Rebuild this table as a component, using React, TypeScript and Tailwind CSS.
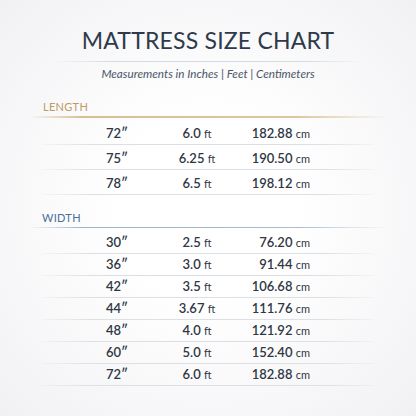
const lengthRows = [
  ["72″", "6.0", "182.88"],
  ["75″", "6.25", "190.50"],
  ["78″", "6.5", "198.12"],
];

const widthRows = [
  ["30″", "2.5", "76.20"],
  ["36″", "3.0", "91.44"],
  ["42″", "3.5", "106.68"],
  ["44″", "3.67", "111.76"],
  ["48″", "4.0", "121.92"],
  ["60″", "5.0", "152.40"],
  ["72″", "6.0", "182.88"],
];

function Row({ row, tall }: { row: string[]; tall?: boolean }) {
  return (
    <div className={`relative flex items-center ${tall ? "h-[25px] pt-[4px]" : "h-[22px]"}`}>
      <div className="w-[86px] text-right text-[13px] font-semibold">{row[0]}</div>
      <div className="ml-[32px] w-[74px] text-center text-[13px] font-semibold whitespace-nowrap">
        {row[1]} <span className="text-[11px] font-normal">ft</span>
      </div>
      <div className="w-[76px] text-right text-[13px] font-semibold whitespace-nowrap">
        {row[2]} <span className="text-[11px] font-normal">cm</span>
      </div>
      <div className="absolute bottom-0 left-0 right-0 h-px bg-[linear-gradient(90deg,rgba(220,223,230,0.2),#dcdfe6_15%,#dcdfe6_85%,rgba(220,223,230,0.2))]" />
    </div>
  );
}

export default function App() {
  return (
    <div
      className="w-[416px] h-[416px] overflow-hidden bg-[radial-gradient(ellipse_at_center,#ffffff_30%,#f1f1f4_100%)] text-[#2f3644]"
      style={{ fontFamily: "Lato, 'Open Sans', sans-serif" }}
    >
      {/* Title */}
      <div className="pt-[26px] text-center text-[23px] leading-[28px] text-[#2e3a4b] tracking-[0.2px]">
        MATTRESS SIZE CHART
      </div>
      <div className="mt-[7px] mx-[50px] h-px bg-[linear-gradient(90deg,rgba(200,210,220,0),#d3dbe3_20%,#d3dbe3_80%,rgba(200,210,220,0))]" />
      <div className="mt-[4px] text-center text-[11.7px] leading-[14px] italic text-[#4a5566]">
        Measurements in Inches | Feet | Centimeters
      </div>

      {/* Length */}
      <div className="mt-[20px] pl-[43px] text-[11px] leading-[14px] text-[#bf9a63] tracking-[0.3px]">
        LENGTH
      </div>
      <div className="mt-[2px] mx-[28px] h-[1.5px] bg-[linear-gradient(90deg,rgba(217,196,158,0),#d6bf95_15%,#dcc7a2_75%,rgba(217,196,158,0))]" />
      <div className="ml-[42px] w-[332px] pt-[2px]">
        {lengthRows.map((r, i) => (
          <Row key={i} row={r} tall />
        ))}
      </div>

      {/* Width */}
      <div className="mt-[16px] pl-[42px] text-[11px] leading-[14px] text-[#4a6f9a] tracking-[0.3px]">
        WIDTH
      </div>
      <div className="mt-[2px] mx-[28px] h-[1.5px] bg-[linear-gradient(90deg,rgba(140,165,190,0),#9fb3c8_15%,#a9bccf_75%,rgba(140,165,190,0))]" />
      <div className="ml-[42px] w-[332px] pt-[4px]">
        {widthRows.map((r, i) => (
          <Row key={i} row={r} />
        ))}
      </div>
    </div>
  );
}
